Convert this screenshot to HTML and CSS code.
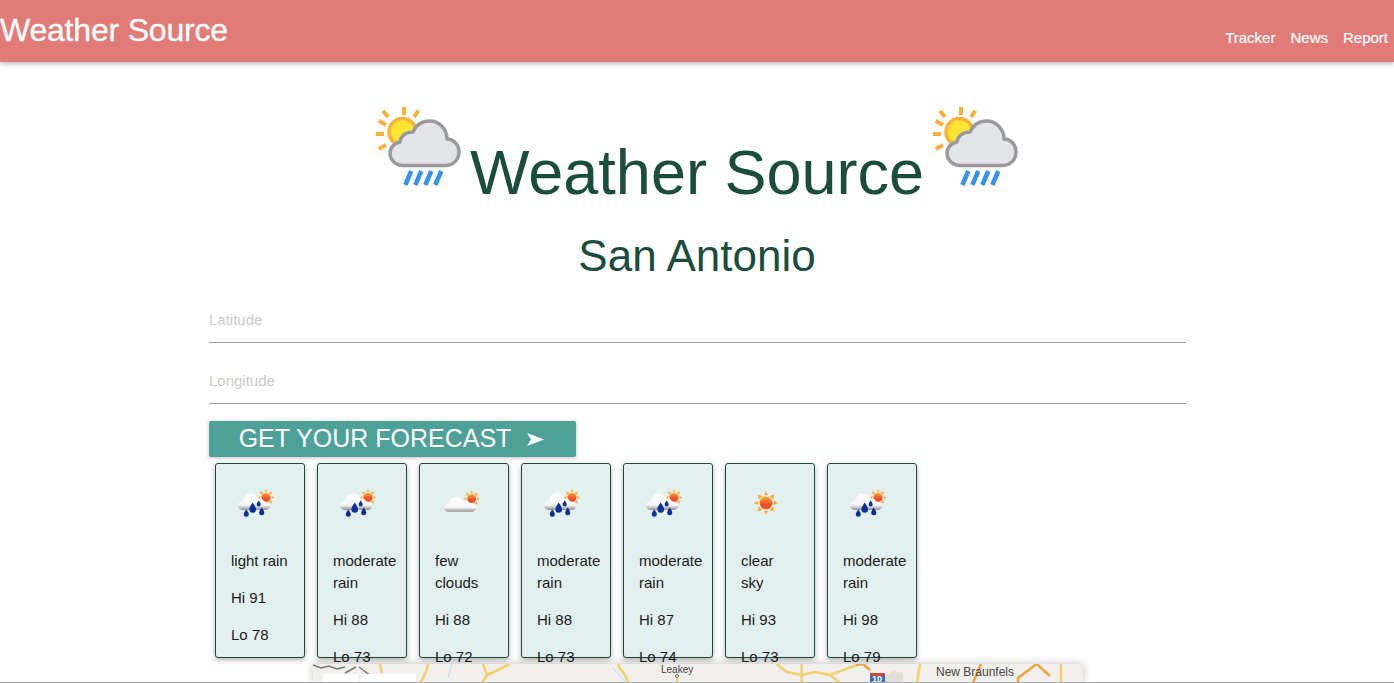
FILE: index.html
```html
<!DOCTYPE html>
<html lang="en">
<head>
    <meta charset="UTF-8">
    <title>Weather Source</title>
    <link rel="stylesheet" href="styles.css">
</head>
<body>
    <svg class="defs" width="0" height="0">
        <defs>
            <linearGradient id="cloud-fill" x1="0" y1="0" x2="0" y2="1">
                <stop offset="0" stop-color="#ffffff"/>
                <stop offset="0.7" stop-color="#f6f6f6"/>
                <stop offset="1" stop-color="#8f8f8f"/>
            </linearGradient>
            <linearGradient id="sun-fill" x1="0" y1="0" x2="0" y2="1">
                <stop offset="0" stop-color="#f9a03a"/>
                <stop offset="0.6" stop-color="#f0522a"/>
                <stop offset="1" stop-color="#ee4a26"/>
            </linearGradient>
            <symbol id="big-icon" viewBox="0 0 88 88">
                <path d="M28 1v8M7 4.700l5 6.300M2.700 14.700l7.300 4.300M0 28h8M2.700 43l7.300-4M42.300 4.700l-4.300 6.300" fill="none" stroke="#fbb03b" stroke-width="4"/>
                <circle cx="26.500" cy="26" r="13.500" fill="#ffe433" stroke="#fbb03b" stroke-width="3.500"/>
                <path d="M27 59.500H69C78 59.500 83 53 83 46 83 38 77 33 71 33 71 23 63 15 54 15 46 15 40 19 37 26 30 26 25 30 24 36 18 37 14 42 14 47 14 54 20 59.500 27 59.500z" fill="#e3e5e8" stroke="#9a9a9c" stroke-width="3.500" stroke-linejoin="round"/>
                <path d="M35.300 65L29.300 79M45.300 65L39.300 79M55.300 65L49.300 79M65.300 65L59.300 79" fill="none" stroke="#3792ee" stroke-width="4.500"/>
            </symbol>
            <symbol id="sun" viewBox="0 0 24 24">
                <path d="M12 0l2 4h-4zM12 24l2-4h-4zM0 12l4 2v-4zM24 12l-4 2v-4zM3.500 3.500l5 1.500-3.500 3.500zM20.500 3.500l-5 1.500 3.500 3.500zM3.500 20.500l5-1.500-3.500-3.500zM20.500 20.500l-5-1.500 3.500-3.500z" fill="#fbaa35"/>
                <circle cx="12" cy="12" r="7.500" fill="#fde3b0"/>
                <circle cx="12" cy="12" r="6.300" fill="url(#sun-fill)"/>
            </symbol>
            <symbol id="rain" viewBox="0 0 38 30">
                <use href="#sun" x="19.500" y="0" width="17" height="17"/>
                <path d="M5 21C2 21 0 19 0 16.500S2 12 5 12C6 7 9 4.500 13 4.500 17 4.500 20 7 21 10 23 9.500 25 10 26 12.500 29 12.500 32 14 32 17 32 19.500 30 21 28 21z" fill="url(#cloud-fill)"/>
                <path d="M14.700 13.500C17 17 18 18.500 18 20.500A3.300 3.300 0 0 1 11.400 20.500C11.400 18.500 12.400 17 14.700 13.500z" fill="#0a2f9c"/>
                <path d="M20.700 11.500C22 13.500 22.700 14.300 22.700 15.500A2 2 0 0 1 18.700 15.500C18.700 14.300 19.400 13.500 20.700 11.500z" fill="#0a2f9c"/>
                <path d="M8.300 20.500C10 23 10.800 24 10.800 25.300A2.500 2.500 0 0 1 5.800 25.300C5.800 24 6.600 23 8.300 20.500z" fill="#0a2f9c"/>
                <path d="M23.700 18.500C25.400 21 26.200 22.200 26.200 23.700A2.500 2.500 0 0 1 21.200 23.700C21.200 22.200 22 21 23.700 18.500z" fill="#0a2f9c"/>
            </symbol>
            <symbol id="clouds" viewBox="0 0 39 30">
                <use href="#sun" x="22" y="1" width="17" height="17"/>
                <path d="M7 23C4 23 2 21.500 2 19S4 14.500 7 14.500C8 10 11 8 15 8 18 8 20 9 22 12 25 11 27 12 28 14 32 14 35 16 35 19 35 21.500 33 23 30 23z" fill="url(#cloud-fill)"/>
            </symbol>
        </defs>
    </svg>

    <nav class="topbar">
        <a class="brand">Weather Source</a>
        <ul class="nav-links">
            <li>Tracker</li>
            <li>News</li>
            <li>Report</li>
        </ul>
    </nav>

    <h1 class="page-title">
        <svg class="title-icon"><use href="#big-icon"/></svg>
        <span>Weather Source</span>
        <svg class="title-icon"><use href="#big-icon"/></svg>
    </h1>
    <h2 class="city">San Antonio</h2>

    <div class="container">
        <input class="coord" type="text" placeholder="Latitude">
        <input class="coord" type="text" placeholder="Longitude">
        <button class="forecast-btn">
            GET YOUR FORECAST
            <svg class="arrow" width="17" height="13" viewBox="0 0 17 13"><path d="M0 0L17 6.500 0 13 4 6.500z" fill="white"/></svg>
        </button>

        <div class="cards">
            <div class="card">
                <svg class="card-icon"><use href="#rain"/></svg>
                <p>light rain</p>
                <p>Hi 91</p>
                <p>Lo 78</p>
            </div>
            <div class="card">
                <svg class="card-icon"><use href="#rain"/></svg>
                <p>moderate rain</p>
                <p>Hi 88</p>
                <p>Lo 73</p>
            </div>
            <div class="card">
                <svg class="card-icon"><use href="#clouds"/></svg>
                <p>few clouds</p>
                <p>Hi 88</p>
                <p>Lo 72</p>
            </div>
            <div class="card">
                <svg class="card-icon"><use href="#rain"/></svg>
                <p>moderate rain</p>
                <p>Hi 88</p>
                <p>Lo 73</p>
            </div>
            <div class="card">
                <svg class="card-icon"><use href="#rain"/></svg>
                <p>moderate rain</p>
                <p>Hi 87</p>
                <p>Lo 74</p>
            </div>
            <div class="card">
                <svg class="card-icon sun-only"><use href="#sun"/></svg>
                <p>clear<br>sky</p>
                <p>Hi 93</p>
                <p>Lo 73</p>
            </div>
            <div class="card">
                <svg class="card-icon"><use href="#rain"/></svg>
                <p>moderate rain</p>
                <p>Hi 98</p>
                <p>Lo 79</p>
            </div>
        </div>

        <div class="map">
            <svg class="map-roads" width="770" height="19" viewBox="0 0 770 19">
                <path d="M138.700 0L135 14M300 4L312 18" fill="none" stroke="#c4d6ee" stroke-width="1"/>
                <path d="M572 18V12L580 7 590 9V18z" fill="#e1dfda"/>
                <path d="M67 0L69 9M115 0C114 7 111 13 107 19M197 0L174 11 169 19M170 0L174 11M305 0C306 6 314 10 315 19M463.700 0L473.700 8 488.700 11 502 8 517 11 543.700 1M488.700 0V19M517 11L527 19M607 0L604 19M748 0V19" fill="none" stroke="#f3cf6c" stroke-width="2.500"/>
                <path d="M543 1L550 0 557 6M723.700 0L705 14V19M723.700 0L737 12M668 0L660 19" fill="none" stroke="#f0a33c" stroke-width="2.500"/>
                <path d="M364 14V19" stroke="#f3cf6c" stroke-width="2"/>
                <circle cx="364" cy="12" r="1.500" fill="#f2f0ec" stroke="#666666"/>
                <path d="M0 1L8 4 16 2 24 5 32 3M32 9L43 3M46 3L54 9 58 12" fill="none" stroke="#777777" stroke-width="1.500"/>
                <rect x="10" y="10" width="93" height="9" rx="1" fill="#ffffff"/>
                <path d="M46 10V19" stroke="#e6e6e6" stroke-width="1"/>
                <rect x="557" y="9" width="15" height="3" fill="#c9473f"/>
                <rect x="557" y="12" width="15" height="7" fill="#3a6fb5"/>
            </svg>
            <span class="map-label leakey">Leakey</span>
            <span class="map-label shield">10</span>
            <span class="map-label braunfels">New Braunfels</span>
        </div>
    </div>

    <div class="window-edge"></div>
</body>
</html>
```
FILE: styles.css
```css
html, body {
    margin: 0;
    padding: 0;
    height: 683px;
    overflow: hidden;
}
body {
    background: white;
    font-family: "Liberation Sans", Arial, sans-serif;
    color: #1a1a1a;
}
.defs {
    position: absolute;
}
.topbar {
    height: 62px;
    background-color: #e17b78;
    box-shadow: 0 2px 5px rgba(0, 0, 0, 0.26);
    color: white;
    display: flex;
    justify-content: space-between;
}
.brand {
    font-size: 32px;
    line-height: 60px;
    letter-spacing: -0.2px;
    -webkit-text-stroke: 0.3px white;
}
.nav-links {
    list-style: none;
    margin: 0;
    padding: 0 6px 0 0;
    display: flex;
    gap: 15px;
    font-size: 15px;
    line-height: 76px;
    -webkit-text-stroke: 0.2px white;
}
.page-title {
    margin: 44px 0 0;
    padding-left: 3px;
    height: 90px;
    display: flex;
    justify-content: center;
    font-size: 63px;
    font-weight: normal;
    line-height: 90px;
    color: #1b4d3e;
}
.page-title span {
    margin: 0 9px 0 6px;
    padding-top: 21px;
}
.title-icon {
    width: 88px;
    height: 88px;
}
.city {
    margin: 35px 0 0;
    font-size: 44px;
    font-weight: normal;
    line-height: 50px;
    text-align: center;
    color: #1b4d3e;
}
.container {
    width: 977px;
    margin: 0 0 0 209px;
    padding-top: 16px;
}
.coord {
    display: block;
    box-sizing: border-box;
    width: 100%;
    height: 46px;
    margin-bottom: 15px;
    padding: 0;
    border: none;
    border-bottom: 1px solid #9e9e9e;
    outline: none;
    font-family: "Liberation Sans", Arial, sans-serif;
    font-size: 15px;
}
.coord::placeholder {
    color: #c9c9c9;
    opacity: 1;
}
.forecast-btn {
    display: flex;
    align-items: center;
    justify-content: center;
    gap: 16px;
    box-sizing: border-box;
    width: 367px;
    height: 36px;
    margin-top: 17px;
    padding: 0 2px 2px 0;
    border: none;
    border-radius: 2px;
    background-color: #4ea199;
    box-shadow: 0 1px 4px rgba(0, 0, 0, 0.25);
    color: white;
    font-family: "Liberation Sans", Arial, sans-serif;
    font-size: 25px;
    line-height: 34px;
}
.arrow {
    margin-top: 3px;
}
.cards {
    display: flex;
    gap: 12px;
    padding: 6px 0 0 6px;
}
.card {
    box-sizing: border-box;
    width: 90px;
    height: 195px;
    padding: 25px 8px 0 15px;
    border: 1px solid #1b4d3e;
    border-radius: 3px;
    background-color: #e2f0ef;
    box-shadow: 0 2px 5px rgba(0, 0, 0, 0.3);
    font-size: 15px;
    line-height: 22px;
}
.card p {
    margin: 0 0 15px;
}
.card-icon {
    display: block;
    width: 38px;
    height: 30px;
    margin: 0 0 31px 7px;
    overflow: visible;
}
.sun-only {
    width: 24px;
    height: 24px;
    margin: 2px 0 35px 13px;
}
.map {
    position: relative;
    width: 770px;
    height: 19px;
    margin: 6px 0 0 104px;
    background-color: #f2f0ec;
    box-shadow: 0 0 8px rgba(0, 0, 0, 0.25);
}
.map-roads {
    display: block;
}
.map-label {
    position: absolute;
    top: 1px;
    font-size: 12px;
    line-height: 14px;
    color: #444;
}
.leakey {
    left: 348px;
    top: -1px;
    font-size: 10px;
}
.shield {
    left: 559px;
    top: 11px;
    font-size: 9px;
    line-height: 9px;
    font-weight: bold;
    color: white;
}
.braunfels {
    left: 623px;
}
.window-edge {
    position: fixed;
    left: 0;
    right: 0;
    bottom: 0;
    height: 1px;
    background-color: #a8a8a8;
}
```
